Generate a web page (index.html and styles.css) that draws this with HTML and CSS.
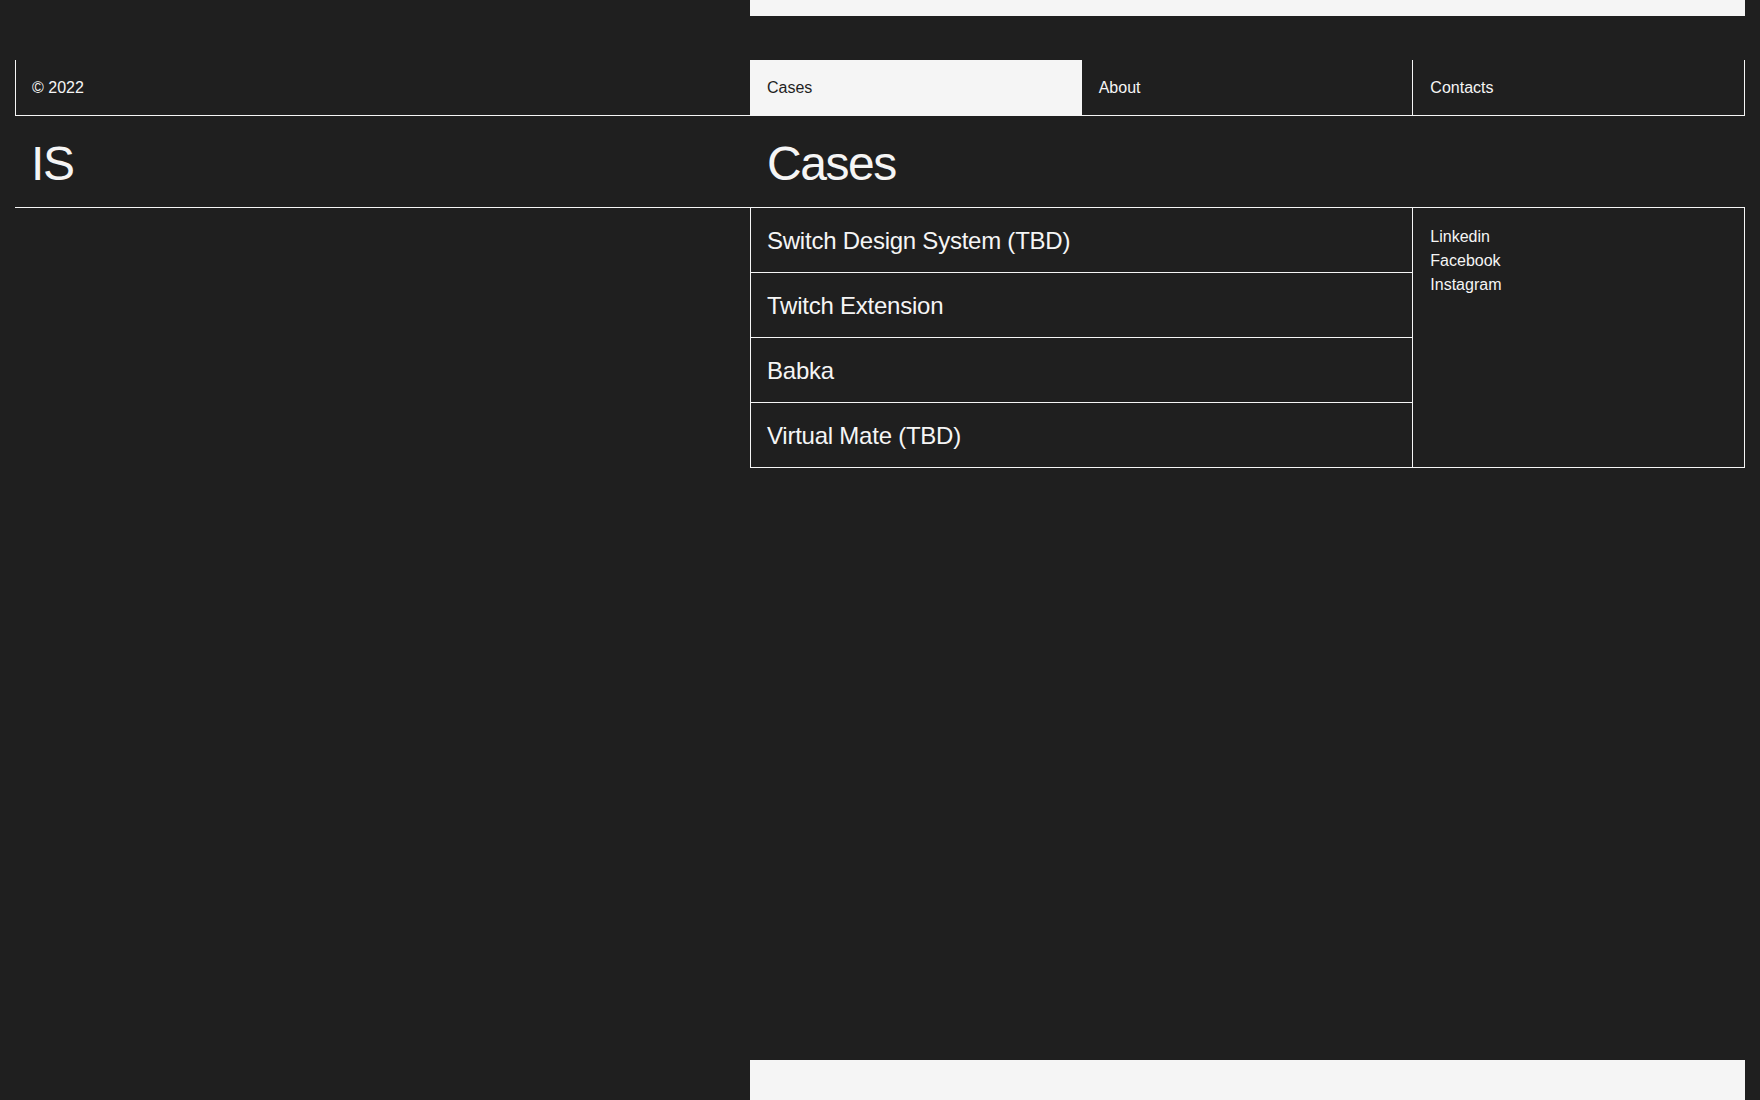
FILE: index.html
```html
<!DOCTYPE html>
<html lang="en">
<head>
    <meta charset="UTF-8">
    <meta name="viewport" content="width=device-width, initial-scale=1.0">
    <title>IS — Cases</title>
    <link rel="stylesheet" href="styles.css">
</head>
<body>
    <div class="page">
        <div class="row top-strip">
            <div></div>
            <div class="strip"></div>
        </div>

        <header class="row nav-row">
            <div class="copy">© 2022</div>
            <nav class="nav">
                <a href="#" class="nav-link active">Cases</a>
                <a href="#" class="nav-link">About</a>
                <a href="#" class="nav-link">Contacts</a>
            </nav>
        </header>

        <div class="row title-row">
            <div class="logo">IS</div>
            <h1 class="page-title">Cases</h1>
        </div>

        <main class="row content">
            <div></div>
            <div class="content-grid">
                <ul class="cases">
                    <li><a href="#">Switch Design System (TBD)</a></li>
                    <li><a href="#">Twitch Extension</a></li>
                    <li><a href="#">Babka</a></li>
                    <li><a href="#">Virtual Mate (TBD)</a></li>
                </ul>
                <ul class="social">
                    <li><a href="#">Linkedin</a></li>
                    <li><a href="#">Facebook</a></li>
                    <li><a href="#">Instagram</a></li>
                </ul>
            </div>
        </main>

        <footer class="row bottom-strip">
            <div></div>
            <div class="strip"></div>
        </footer>
    </div>
</body>
</html>
```

FILE: styles.css
```css
* {
    box-sizing: border-box;
}

body {
    font-family: "Liberation Sans", Arial, sans-serif;
    background-color: #1f1f1f;
    color: #f5f5f5;
    margin: 0;
    padding: 0;
}

a {
    color: inherit;
    text-decoration: none;
}

ul {
    list-style: none;
    margin: 0;
    padding: 0;
}

.page {
    min-height: 100vh;
    padding: 0 15px;
    display: flex;
    flex-direction: column;
}

.row {
    display: grid;
    grid-template-columns: 735px 1fr;
}

.strip {
    background-color: #f5f5f5;
}

.top-strip {
    height: 16px;
    margin-bottom: 44px;
}

.bottom-strip {
    height: 40px;
    margin-top: auto;
}

/* nav */
.nav-row {
    height: 56px;
    border-bottom: 1px solid #f5f5f5;
    font-size: 16px;
    line-height: 19px;
}

.copy {
    border-left: 1px solid #f5f5f5;
    padding: 0 16px;
    display: flex;
    align-items: center;
}

.nav {
    display: grid;
    grid-template-columns: repeat(3, 1fr);
}

.nav-link {
    display: flex;
    align-items: center;
    padding: 0 17px;
    border-right: 1px solid #f5f5f5;
}

.nav-link.active {
    background-color: #f5f5f5;
    color: #1f1f1f;
    border-right: none;
}

/* titles */
.title-row {
    border-bottom: 1px solid #f5f5f5;
    padding: 18px 0 14px;
}

.logo,
.page-title {
    margin: 0;
    font-size: 48px;
    font-weight: normal;
    line-height: 59px;
    letter-spacing: -0.03em;
    padding-left: 16px;
}

.page-title {
    padding-left: 17px;
}

/* content */
.content-grid {
    display: grid;
    grid-template-columns: repeat(3, 1fr);
    align-items: start;
}

.cases {
    grid-column: span 2;
    border-left: 1px solid #f5f5f5;
    border-right: 1px solid #f5f5f5;
}

.cases li {
    border-bottom: 1px solid #f5f5f5;
}

.cases a {
    display: block;
    height: 64px;
    padding: 18px 16px;
    font-size: 24px;
    line-height: 29px;
    letter-spacing: -0.01em;
}

.social {
    height: 260px;
    border-right: 1px solid #f5f5f5;
    border-bottom: 1px solid #f5f5f5;
    padding: 17px 17px;
    font-size: 16px;
    line-height: 24px;
}

.social li a:hover,
.cases a:hover {
    text-decoration: underline;
}
```
